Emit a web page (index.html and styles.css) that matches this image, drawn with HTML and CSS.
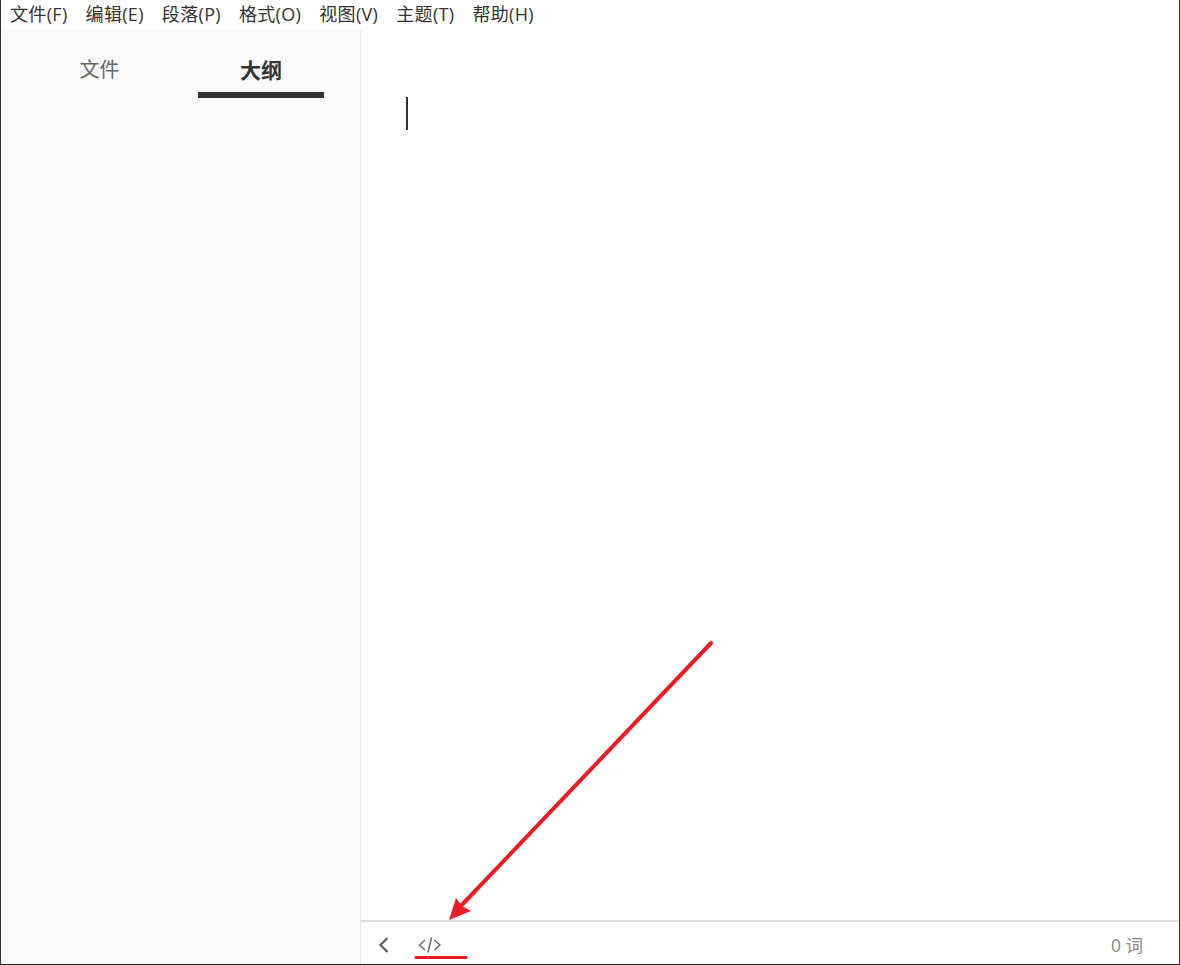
FILE: index.html
```html
<!DOCTYPE html>
<html lang="zh-CN">
<head>
  <meta charset="UTF-8">
  <title>大纲</title>
  <link rel="stylesheet" href="styles.css">
</head>
<body>
  <div class="app">
    <div class="menubar">
      <span class="menu">文件(F)</span>
      <span class="menu">编辑(E)</span>
      <span class="menu">段落(P)</span>
      <span class="menu">格式(O)</span>
      <span class="menu">视图(V)</span>
      <span class="menu">主题(T)</span>
      <span class="menu">帮助(H)</span>
    </div>
    <div class="main">
      <div class="sidebar">
        <div class="tabs">
          <div class="tab">文件</div>
          <div class="tab active">大纲</div>
        </div>
      </div>
      <div class="content">
        <div class="editor">
          <div class="caret"></div>
        </div>
        <div class="footer">
          <svg class="icon-back" width="12" height="18" viewBox="0 0 12 18">
            <path d="M9.500 2 L2.500 9 L9.500 16" fill="none" stroke="#666" stroke-width="2.400"/>
          </svg>
          <svg class="icon-code" width="24" height="18" viewBox="0 0 24 18">
            <path d="M7 4 L1.500 9 L7 14 M16.500 4 L22 9 L16.500 14 M13.500 1.500 L10 16.500" fill="none" stroke="#666" stroke-width="1.400"/>
          </svg>
          <span class="words">0 词</span>
        </div>
      </div>
    </div>
  </div>

  <!-- 红色标注 -->
  <svg class="marks" width="1180" height="965" viewBox="0 0 1180 965">
    <path d="M711 643 L458 909" fill="none" stroke="#ed1c24" stroke-width="4" stroke-linecap="round"/>
    <path d="M449 920 L456 898 L462 906 L471 911 Z" fill="#ed1c24"/>
    <path d="M416 957.500 L466 957.500" fill="none" stroke="#ed1c24" stroke-width="3" stroke-linecap="round"/>
  </svg>
</body>
</html>
```
FILE: styles.css
```css
*{
  padding: 0;
  margin: 0;
  box-sizing: border-box;
}
html,body{
  height: 100%;
  overflow: hidden;
}
body{
  background-color: #fff;
  font-family: "Open Sans", "Noto Sans CJK SC", sans-serif;
}
.app{
  display: flex;
  flex-direction: column;
  height: 965px;
  border-left: 1px solid #333;
  border-right: 1px solid #333;
  border-bottom: 1px solid #222;
}
.menubar{
  display: flex;
  height: 30px;
  padding-left: 9px;
  gap: 18px;
  line-height: 29px;
  font-size: 18px;
  letter-spacing: .33px;
  color: #333;
}
.main{
  display: flex;
  flex: 1;
  min-height: 0;
}
.sidebar{
  width: 360px;
  background-color: #fafafa;
  border-right: 1px solid #e8e8e8;
}
.tabs{
  display: flex;
  padding: 20px 0 0 35px;
  gap: 36px;
}
.tab{
  width: 126px;
  height: 48px;
  padding-left: 1px;
  line-height: 40px;
  text-align: center;
  font-size: 20px;
  color: #666;
}
.tab.active{
  padding-left: 0;
  font-size: 21px;
  font-weight: 700;
  color: #333;
  border-bottom: 6px solid #333;
}
.content{
  display: flex;
  flex-direction: column;
  flex: 1;
}
.editor{
  flex: 1;
  padding: 67px 0 0 45px;
}
.caret{
  width: 2px;
  height: 33px;
  background-color: #333;
}
.footer{
  display: flex;
  align-items: center;
  height: 44px;
  padding: 2px 36px 0 17px;
  border-top: 2px solid #ddd;
  color: #888;
  font-size: 17.500px;
}
.icon-back{
  margin-top: 2px;
}
.icon-code{
  margin-left: 28px;
  margin-top: 2px;
}
.words{
  margin-left: auto;
}
.marks{
  position: absolute;
  left: 0;
  top: 0;
  pointer-events: none;
}
```
